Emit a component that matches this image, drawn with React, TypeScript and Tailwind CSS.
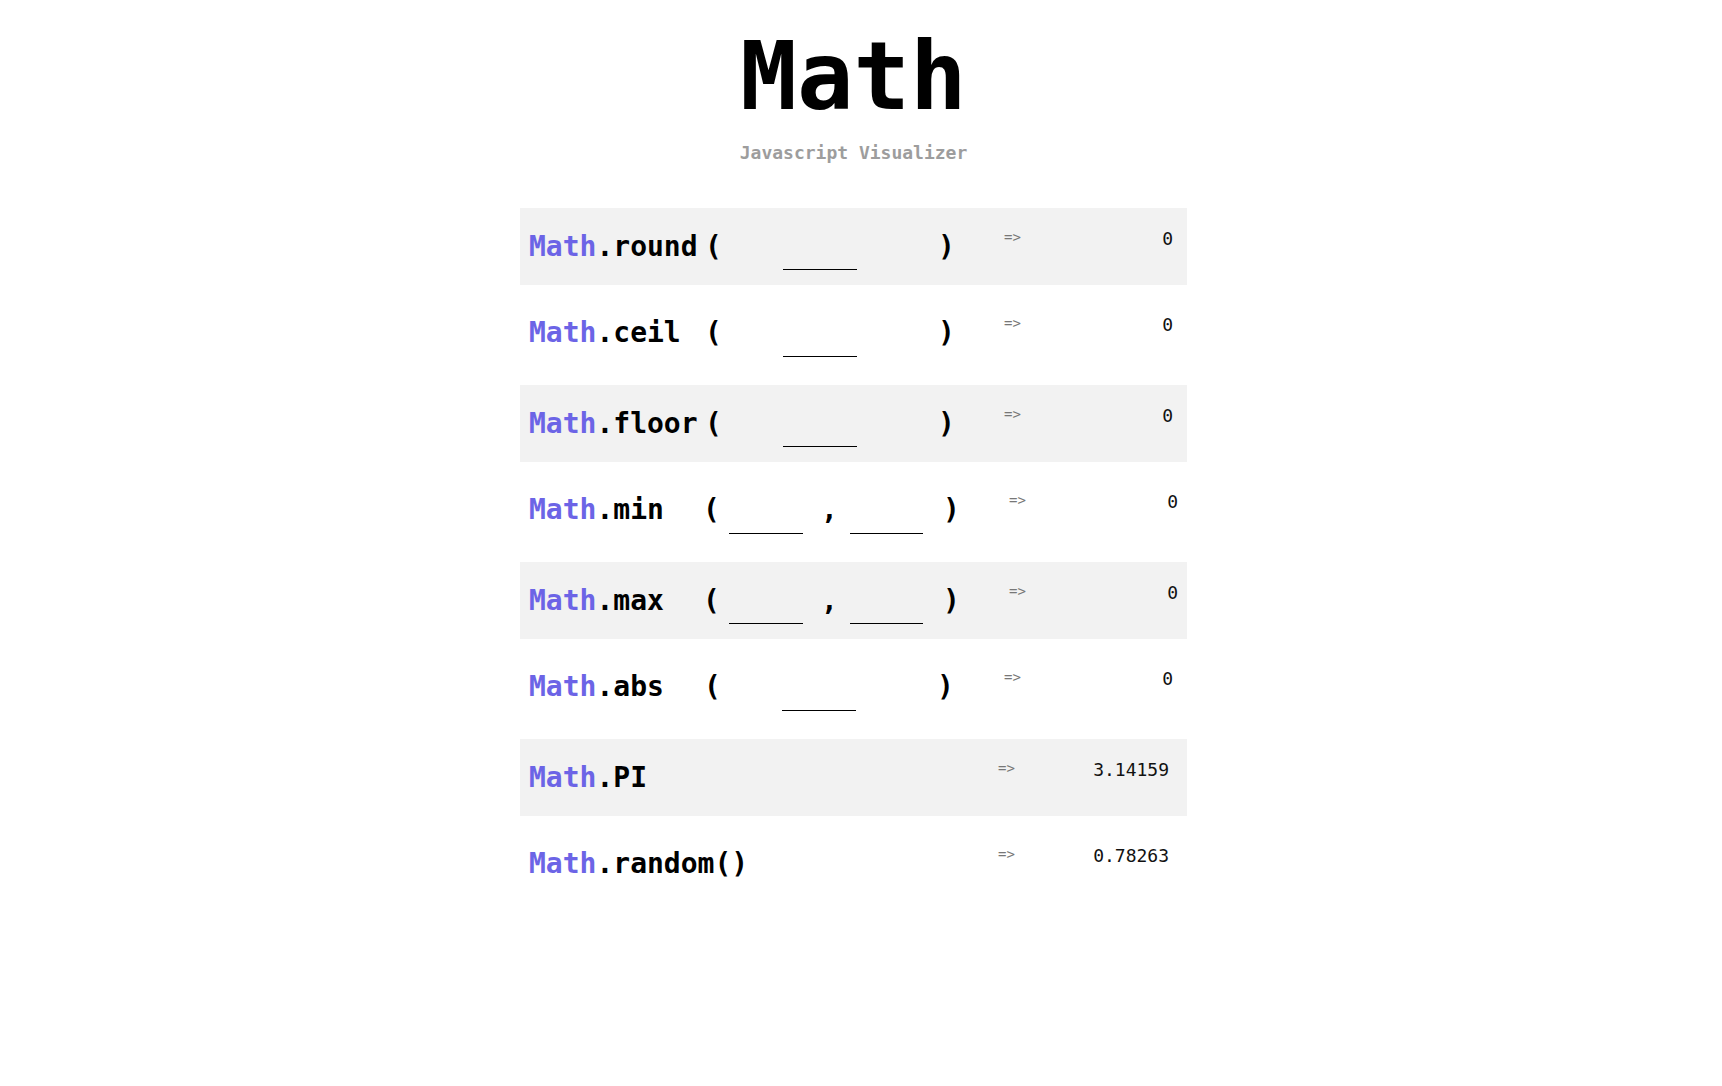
import { useState } from "react";

// Row layouts: widths are tuned so the parens, blanks and arrows line up like the original
type Kind = "one" | "two" | "const";

interface Row {
  name: string;
  kind: Kind;
  result: string;
  nameW: number;
}

const rows: Row[] = [
  { name: "round", kind: "one", result: "0", nameW: 176 },
  { name: "ceil", kind: "one", result: "0", nameW: 176 },
  { name: "floor", kind: "one", result: "0", nameW: 176 },
  { name: "min", kind: "two", result: "0", nameW: 174 },
  { name: "max", kind: "two", result: "0", nameW: 174 },
  { name: "abs", kind: "one", result: "0", nameW: 175 },
  { name: "PI", kind: "const", result: "3.14159", nameW: 0 },
  { name: "random()", kind: "const", result: "0.78263", nameW: 0 },
];

function Blank({ className }: { className: string }) {
  return (
    <input
      type="text"
      className={`h-[47px] border-b border-black bg-transparent outline-none text-center text-[18px] ${className}`}
    />
  );
}

function Paren({ children }: { children: string }) {
  return <span className="w-[17px] text-center shrink-0">{children}</span>;
}

function MathRow({ row, shaded }: { row: Row; shaded: boolean }) {
  const leftW = row.kind === "one" ? "w-[475px]" : row.kind === "two" ? "w-[480px]" : "w-[469px]";
  const resultPad = row.kind === "one" ? "pr-[14px]" : row.kind === "two" ? "pr-[9px]" : "pr-[18px]";

  return (
    <div
      className={`flex items-center pl-[9px] ${
        shaded ? "h-[77px] bg-[#f2f2f2]" : "h-[100px] pb-[4px]"
      }`}
    >
      <div className={`flex items-center shrink-0 text-[28px] font-bold leading-none text-black ${leftW}`}>
        <span style={{ width: row.nameW || undefined }} className="shrink-0 whitespace-pre">
          <span className="text-[#6c64e6]">Math</span>.{row.name}
        </span>
        {row.kind === "one" && (
          <>
            <Paren>(</Paren>
            <Blank className="ml-[61px] w-[74px] shrink-0" />
            <span className="ml-[81px] w-[17px] text-center shrink-0">)</span>
          </>
        )}
        {row.kind === "two" && (
          <>
            <Paren>(</Paren>
            <Blank className="ml-[9px] w-[74px] shrink-0" />
            <span className="ml-[18px] w-[17px] text-center shrink-0">,</span>
            <Blank className="ml-[12px] w-[73px] shrink-0" />
            <span className="ml-[20px] w-[17px] text-center shrink-0">)</span>
          </>
        )}
      </div>
      <span className="mb-[20px] text-[14px] leading-none text-[#777777]">=&gt;</span>
      <span className={`flex-1 text-right mb-[16px] text-[18px] leading-none text-[#111111] ${resultPad}`}>
        {row.result}
      </span>
    </div>
  );
}

export default function App() {
  const [items] = useState(rows);

  return (
    <div
      className="min-h-screen bg-white pr-[15px] flex flex-col items-center"
      style={{ fontFamily: '"DejaVu Sans Mono", monospace' }}
    >
      {/* Header */}
      <h1 className="pt-[30px] text-[94px] font-bold leading-none text-black">Math</h1>
      <p className="mt-[20px] text-[18px] font-bold leading-none text-[#9d9d9d]">Javascript Visualizer</p>

      {/* Rows */}
      <div className="mt-[46px] w-[667px] flex flex-col">
        {items.map((row, i) => (
          <MathRow key={row.name} row={row} shaded={i % 2 === 0} />
        ))}
      </div>
    </div>
  );
}
